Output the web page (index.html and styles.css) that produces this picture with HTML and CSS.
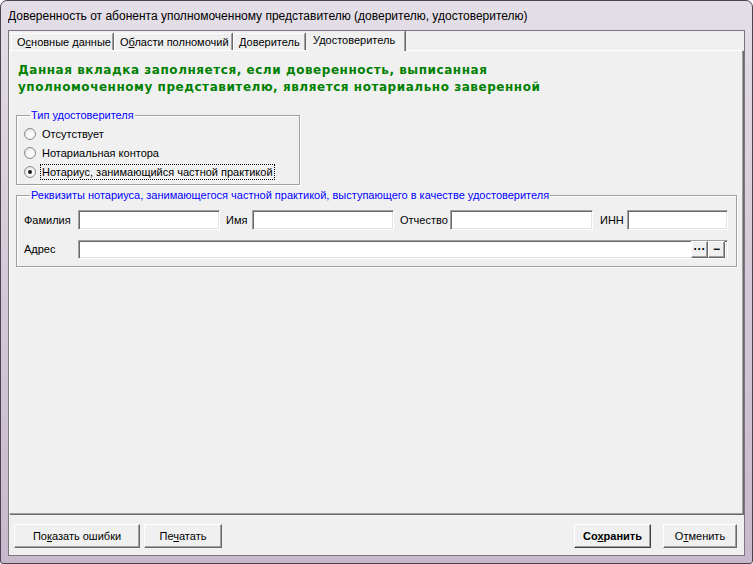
FILE: index.html
```html
<!DOCTYPE html>
<html lang="ru">

<head>
    <meta charset="UTF-8">
    <title>Доверенность от абонента уполномоченному представителю</title>
    <link rel="stylesheet" href="styles.css">
</head>

<body>
    <div class="window">
        <!-- Title bar -->
        <div class="titlebar">Доверенность от абонента уполномоченному представителю (доверителю, удостоверителю)</div>

        <div class="client">
            <!-- Tabs -->
            <div class="tabs">
                <div class="tab tab-main">О<u>с</u>новные данные</div>
                <div class="tab tab-areas">О<u>б</u>ласти полномочий</div>
                <div class="tab tab-trustor"><u>Д</u>оверитель</div>
                <div class="tab tab-notary active">Удостоверитель</div>
            </div>

            <!-- Tab page -->
            <div class="panel">
                <p class="note">Данная вкладка заполняется, если доверенность, выписанная уполномоченному представителю, является нотариально заверенной</p>

                <fieldset class="group group-type">
                    <legend>Тип удостоверителя</legend>
                    <label class="radio"><span class="radio-box"></span><span class="radio-text">Отсутствует</span></label>
                    <label class="radio"><span class="radio-box"></span><span class="radio-text">Нотариальная контора</span></label>
                    <label class="radio"><span class="radio-box checked"></span><span class="radio-text focused">Нотариус, занимающийся частной практикой</span></label>
                </fieldset>

                <fieldset class="group group-details">
                    <legend>Реквизиты нотариуса, занимающегося частной практикой, выступающего в качестве удостоверителя</legend>
                    <div class="row">
                        <span class="lbl lbl-first">Фамилия</span>
                        <div class="field field-surname"></div>
                        <span class="lbl lbl-name">Имя</span>
                        <div class="field field-name"></div>
                        <span class="lbl lbl-patr">Отчество</span>
                        <div class="field field-patr"></div>
                        <span class="lbl lbl-inn">ИНН</span>
                        <div class="field field-inn"></div>
                    </div>
                    <div class="row">
                        <span class="lbl lbl-first">Адрес</span>
                        <div class="field field-address">
                            <span class="mini-btn">&middot;&middot;&middot;</span>
                            <span class="mini-btn">&minus;</span>
                        </div>
                    </div>
                </fieldset>
            </div>

            <!-- Bottom buttons -->
            <div class="footer">
                <button class="btn btn-errors">По<u>к</u>азать ошибки</button>
                <button class="btn btn-print">Пе<u>ч</u>атать</button>
                <div class="spacer"></div>
                <button class="btn btn-save">Со<u>х</u>ранить</button>
                <button class="btn btn-cancel">О<u>т</u>менить</button>
            </div>
        </div>
    </div>
</body>

</html>
```

FILE: styles.css
```css
/* General Reset */
* {
    margin: 0;
    padding: 0;
    box-sizing: border-box;
}

body {
    font-family: 'Liberation Sans', Arial, sans-serif;
    font-size: 11px;
    color: #000;
    background: #fff;
}

/* Window frame */
.window {
    width: 753px;
    height: 564px;
    border: 1px solid #4b4352;
    border-radius: 7px 7px 3px 3px;
    background: linear-gradient(180deg, #e3dee7 0%, #d6cdd9 40%, #c7b9cb 100%);
    padding: 0 7px 7px;
    display: flex;
    flex-direction: column;
}

.titlebar {
    height: 29px;
    line-height: 30px;
    font-size: 12px;
    white-space: nowrap;
    overflow: hidden;
}

.client {
    flex: 1;
    background-color: #f0f0f0;
    border: 1px solid #7d7482;
    display: flex;
    flex-direction: column;
}

/* Tabs */
.tabs {
    height: 19px;
    display: flex;
    align-items: flex-end;
    padding-left: 2px;
}

.tab {
    height: 17px;
    line-height: 16px;
    padding-left: 5px;
    border-top: 1px solid #fff;
    border-left: 1px solid #fff;
    border-right: 1px solid #a0a0a0;
    box-shadow: 1px 0 0 #696969;
    margin-right: 1px;
    white-space: nowrap;
}

.tab-main { width: 102px; }
.tab-areas { width: 118px; }
.tab-trustor { width: 72px; }
.tab-notary { width: 99px; }

.tab.active {
    height: 20px;
    line-height: 17px;
    margin-bottom: -1px;
    position: relative;
    z-index: 1;
    background-color: #f0f0f0;
    border-top: 1px solid #f0f0f0;
    border-left: none;
    padding-left: 7px;
}

/* Tab page */
.panel {
    flex: 1;
    border-top: 1px solid #fff;
    border-left: 1px solid #fff;
    border-right: 1px solid #a0a0a0;
    border-bottom: 1px solid #a0a0a0;
    box-shadow: 1px 1px 0 #696969;
    margin-right: 1px;
    padding: 11px 0 0 6px;
}

.note {
    font-family: 'DejaVu Sans', Verdana, sans-serif;
    font-weight: bold;
    font-size: 12px;
    line-height: 16.5px;
    letter-spacing: 0.55px;
    color: #008000;
    width: 600px;
    padding-left: 2px;
}

/* Group boxes */
.group {
    border: 1px solid #a0a0a0;
    box-shadow: inset 1px 1px 0 #fff, 1px 1px 0 #fff;
}

.group legend {
    color: #0000ff;
    line-height: 14px;
    padding: 0 1px;
    margin-left: 6px;
}

.group-type {
    width: 284px;
    margin-top: 13px;
    padding: 2px 0 3px 7px;
}

.group-details {
    width: 721px;
    margin-top: 3px;
    padding: 8px 0 7px 7px;
}

/* Radios */
.radio {
    display: flex;
    align-items: center;
    height: 19px;
}

.radio-box {
    width: 12px;
    height: 12px;
    border-radius: 50%;
    border: 1px solid #8b8b8b;
    background: radial-gradient(circle at 60% 60%, #ffffff 0%, #f2f2f2 50%, #d0d0d0 100%);
    margin-right: 4px;
    position: relative;
}

.radio-box.checked::after {
    content: "";
    position: absolute;
    left: 3px;
    top: 3px;
    width: 4px;
    height: 4px;
    border-radius: 50%;
    background-color: #1a1a1a;
}

.radio-text {
    padding: 1px 1px;
    border: 1px dotted transparent;
}

.radio-text.focused {
    border-color: #000;
}

/* Field rows */
.row {
    display: flex;
    align-items: center;
    height: 20px;
}

.row + .row {
    margin-top: 9px;
}

.lbl {
    white-space: nowrap;
}

.lbl-first { width: 54px; }
.lbl-name { width: 26px; margin-left: 6px; }
.lbl-patr { width: 50px; margin-left: 6px; }
.lbl-inn { width: 27px; margin-left: 7px; }

.field {
    height: 20px;
    background-color: #fff;
    border-top: 1px solid #a0a0a0;
    border-left: 1px solid #a0a0a0;
    border-right: 1px solid #fff;
    border-bottom: 1px solid #fff;
    box-shadow: inset 1px 1px 0 #696969, inset -1px -1px 0 #e3e3e3;
}

.field-surname { width: 142px; }
.field-name { width: 142px; }
.field-patr { width: 143px; }
.field-inn { width: 101px; }

.field-address {
    width: 650px;
    height: 19px;
    display: flex;
    justify-content: flex-end;
    align-items: center;
    padding-right: 2px;
}

.mini-btn {
    width: 17px;
    height: 17px;
    background-color: #f0f0f0;
    border-top: 1px solid #fff;
    border-left: 1px solid #fff;
    border-right: 1px solid #696969;
    border-bottom: 1px solid #696969;
    box-shadow: inset -1px -1px 0 #a0a0a0;
    font-weight: bold;
    font-size: 12px;
    line-height: 14px;
    text-align: center;
}

/* Footer buttons */
.footer {
    height: 41px;
    display: flex;
    align-items: center;
    padding: 2px 7px 0 5px;
}

.spacer {
    flex: 1;
}

.btn {
    height: 24px;
    font-family: 'Liberation Sans', Arial, sans-serif;
    font-size: 11px;
    color: #000;
    background-color: #f0f0f0;
    border-top: 1px solid #fff;
    border-left: 1px solid #fff;
    border-right: 1px solid #696969;
    border-bottom: 1px solid #696969;
    box-shadow: inset -1px -1px 0 #a0a0a0;
    margin-right: 4px;
}

.btn-errors { width: 126px; }
.btn-print { width: 78px; }
.btn-save {
    width: 77px;
    font-weight: bold;
    margin-right: 12px;
    border-right-color: #404040;
    border-bottom-color: #404040;
}
.btn-cancel { width: 74px; margin-right: 0; }
```
